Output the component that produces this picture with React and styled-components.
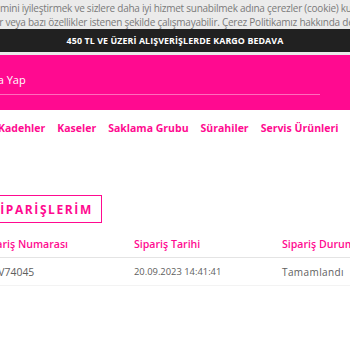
import React from "react";
import styled, { createGlobalStyle } from "styled-components";

const Global = createGlobalStyle`
  html, body { margin: 0; padding: 0; background: #fff; overflow: hidden; }
  body { font-family: "Open Sans", "Noto Sans", sans-serif; }
`;

const PINK = "#ff0a90";

const Page = styled.div`
  width: 350px;
  height: 350px;
  overflow: hidden;
  background: #fff;
`;

const CookieBar = styled.div`
  background: #ebebeb;
  color: #7a7a7a;
  font-size: 10px;
  letter-spacing: -0.25px;
  line-height: 14px;
  padding: 1px 0 0;
  height: 29px;
  box-sizing: border-box;
  white-space: nowrap;
  overflow: hidden;
`;

const CookieLine = styled.div`
  margin-left: ${(p) => p.$shift}px;
`;

const Promo = styled.div`
  background: #212121;
  color: #fff;
  font-weight: 700;
  font-size: 8.85px;
  height: 23px;
  display: flex;
  align-items: center;
  justify-content: center;
  letter-spacing: 0.1px;
  border-bottom: 3px solid #e9e9e9;
`;

const SearchBand = styled.div`
  background: ${PINK};
  height: 55px;
  padding-top: 17px;
  box-sizing: border-box;
`;

const SearchField = styled.div`
  width: 350px;
  margin-left: -30px;
  border-bottom: 1px solid #ff6cbc;
  color: #fff;
  font-size: 11px;
  height: 23px;
  box-sizing: border-box;
  display: flex;
  align-items: flex-start;
`;

const Nav = styled.nav`
  display: flex;
  gap: 12px;
  margin-left: -2px;
  height: 36px;
  align-items: center;
  white-space: nowrap;
`;

const NavItem = styled.a`
  color: ${PINK};
  font-weight: 700;
  font-size: 10.5px;
  text-decoration: none;
`;

const Content = styled.div`
  margin-left: -19px;
  padding-top: 49px;
`;

const TitleBox = styled.div`
  display: inline-flex;
  align-items: center;
  border: 1.5px solid ${PINK};
  height: 28px;
  box-sizing: border-box;
  padding: 0 8px 0 10px;
  color: ${PINK};
  font-weight: 700;
  font-size: 12px;
  letter-spacing: 1.6px;
`;

const Table = styled.div`
  margin-top: 8px;
  width: 446px;
`;

const Row = styled.div`
  display: grid;
  grid-template-columns: 153px 148px 145px;
  height: ${(p) => p.$h}px;
  align-items: center;
  border-bottom: 1px solid ${(p) => p.$line};
  white-space: nowrap;
`;

const HeadCell = styled.div`
  color: ${PINK};
  font-weight: 600;
  font-size: 10.6px;
`;

const Cell = styled.div`
  color: #5e5e5e;
  font-size: ${(p) => p.$size || 9.4}px;
  letter-spacing: ${(p) => p.$spacing || 0}px;
  padding-left: ${(p) => p.$indent || 0}px;
`;

export default function App() {
  return (
    <Page>
      <Global />
      <CookieBar>
        <CookieLine $shift={0}>mini iyileştirmek ve sizlere daha iyi hizmet sunabilmek adına çerezler (cookie) kullanılmaktadır.</CookieLine>
        <CookieLine $shift={-3}>ir veya bazı özellikler istenen şekilde çalışmayabilir. Çerez Politikamız hakkında detaylı bilgi</CookieLine>
      </CookieBar>
      <Promo>450 TL VE ÜZERİ ALIŞVERİŞLERDE KARGO BEDAVA</Promo>
      <SearchBand>
        <SearchField>Arama Yap</SearchField>
      </SearchBand>
      <Nav>
        <NavItem>Kadehler</NavItem>
        <NavItem>Kaseler</NavItem>
        <NavItem>Saklama Grubu</NavItem>
        <NavItem>Sürahiler</NavItem>
        <NavItem>Servis Ürünleri</NavItem>
      </Nav>
      <Content>
        <TitleBox>SİPARİŞLERİM</TitleBox>
        <Table>
          <Row $h={26} $line="#e4e4e4">
            <HeadCell>Sipariş Numarası</HeadCell>
            <HeadCell>Sipariş Tarihi</HeadCell>
            <HeadCell>Sipariş Durumu</HeadCell>
          </Row>
          <Row $h={27} $line="#f3f3f3">
            <Cell $indent={2} $size={10.4}>WEV74045</Cell>
            <Cell>20.09.2023 14:41:41</Cell>
            <Cell $size={10} $spacing={0.4}>Tamamlandı</Cell>
          </Row>
        </Table>
      </Content>
    </Page>
  );
}
